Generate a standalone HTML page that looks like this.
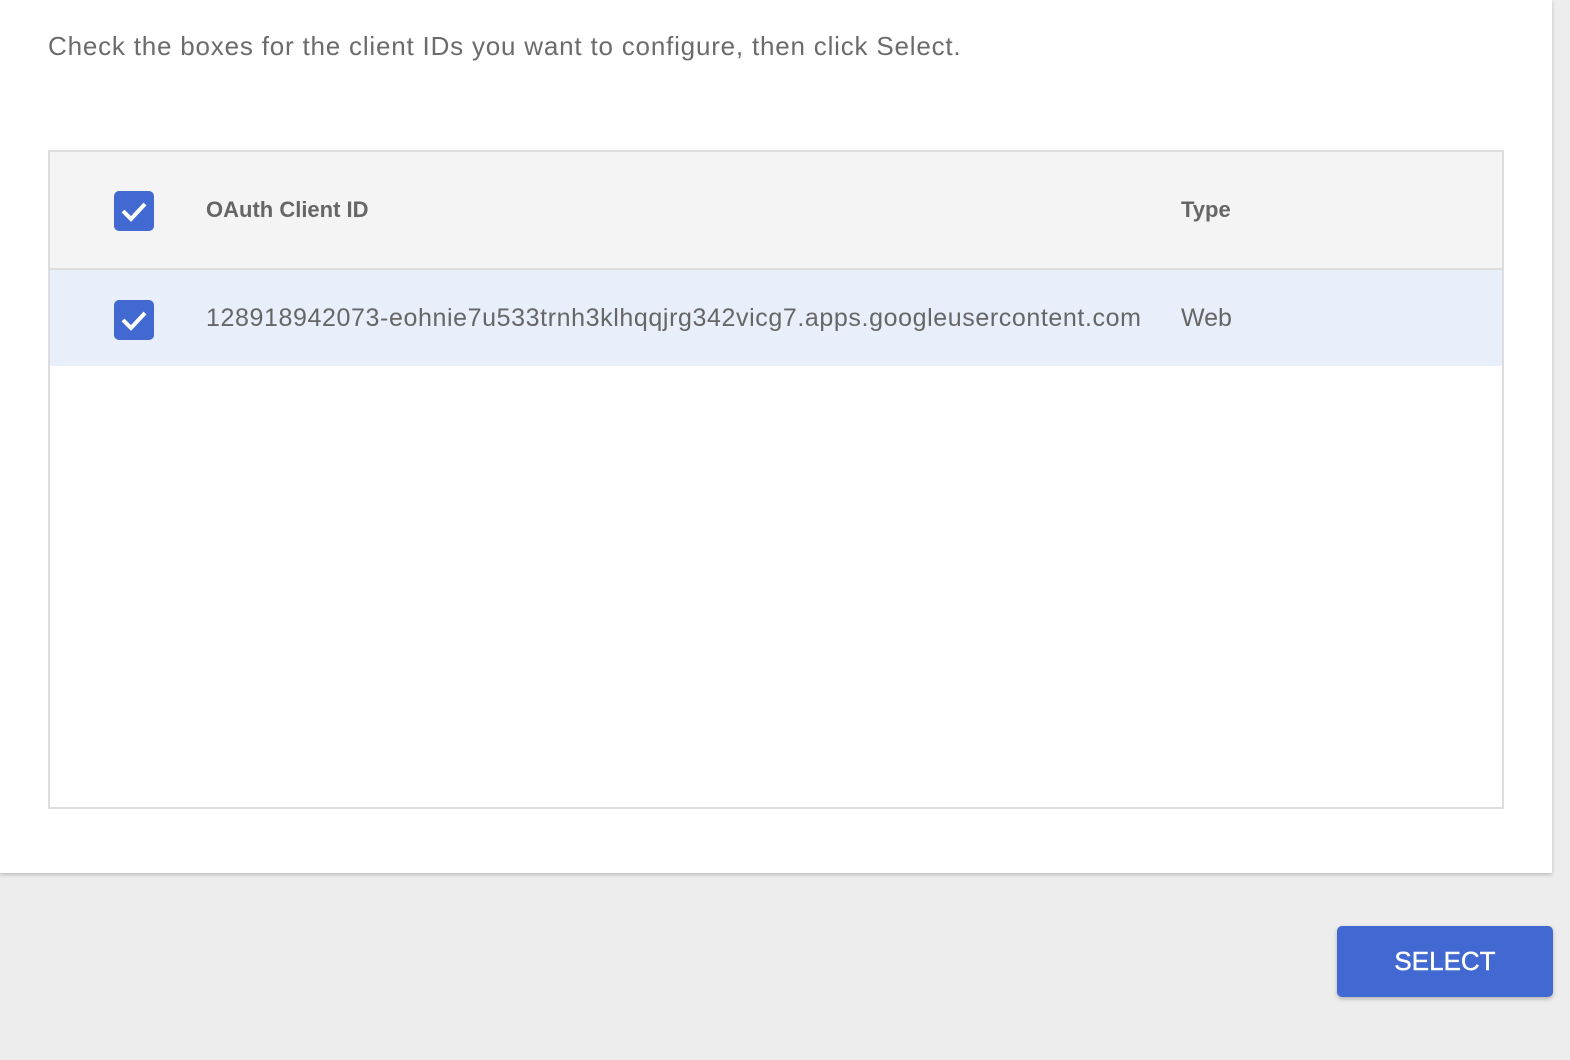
<!DOCTYPE html>
<html><head><style>
body{margin:0;width:1570px;height:1060px;background:#ededed;font-family:"Liberation Sans",sans-serif;position:relative;overflow:hidden}
.panel{position:absolute;left:0;top:0;width:1552px;height:873px;background:#fff;box-shadow:0 2px 4px rgba(0,0,0,.2)}
.p{position:absolute;left:48px;top:31px;font-size:26px;letter-spacing:0.8px;color:#6b6b6b;white-space:nowrap}
.tbl{position:absolute;left:48px;top:150px;width:1452px;height:655px;border:2px solid #ddd;background:#fff}
.hd{position:absolute;left:0;top:0;width:1452px;height:116px;background:#f4f4f4;border-bottom:2px solid #ddd}
.row{position:absolute;left:0;top:118px;width:1452px;height:96px;background:#e8effb}
.cb{position:absolute;left:64px;width:40px;height:40px;border-radius:5px;background:#4169d1}
.cb svg{position:absolute;left:0;top:0}
.t{position:absolute;color:#666;white-space:nowrap}
.btn{position:absolute;left:1337px;top:926px;width:216px;height:71px;border-radius:5px;background:#4169d1;color:#fff;font-size:26px;text-align:center;line-height:71px;box-shadow:0 2px 4px rgba(0,0,0,.25);-webkit-text-stroke:0.4px #fff}
</style></head><body>
<div class="panel">
<div class="p">Check the boxes for the client IDs you want to configure, then click Select.</div>
<div class="tbl">
<div class="hd">
<div class="cb" style="top:39px"><svg width="40" height="40"><path d="M9 20 L17 28 L31 13" fill="none" stroke="#fff" stroke-width="4"/></svg></div>
<div class="t" style="left:156px;top:45px;font-size:22px;font-weight:bold">OAuth Client ID</div>
<div class="t" style="left:1131px;top:45px;font-size:22px;font-weight:bold">Type</div>
</div>
<div class="row">
<div class="cb" style="top:30px"><svg width="40" height="40"><path d="M9 20 L17 28 L31 13" fill="none" stroke="#fff" stroke-width="4"/></svg></div>
<div class="t" style="left:156px;top:34px;font-size:25px;letter-spacing:0.6px">128918942073-eohnie7u533trnh3klhqqjrg342vicg7.apps.googleusercontent.com</div>
<div class="t" style="left:1131px;top:34px;font-size:25px">Web</div>
</div>
</div>
</div>
<div class="btn">SELECT</div>
</body></html>
